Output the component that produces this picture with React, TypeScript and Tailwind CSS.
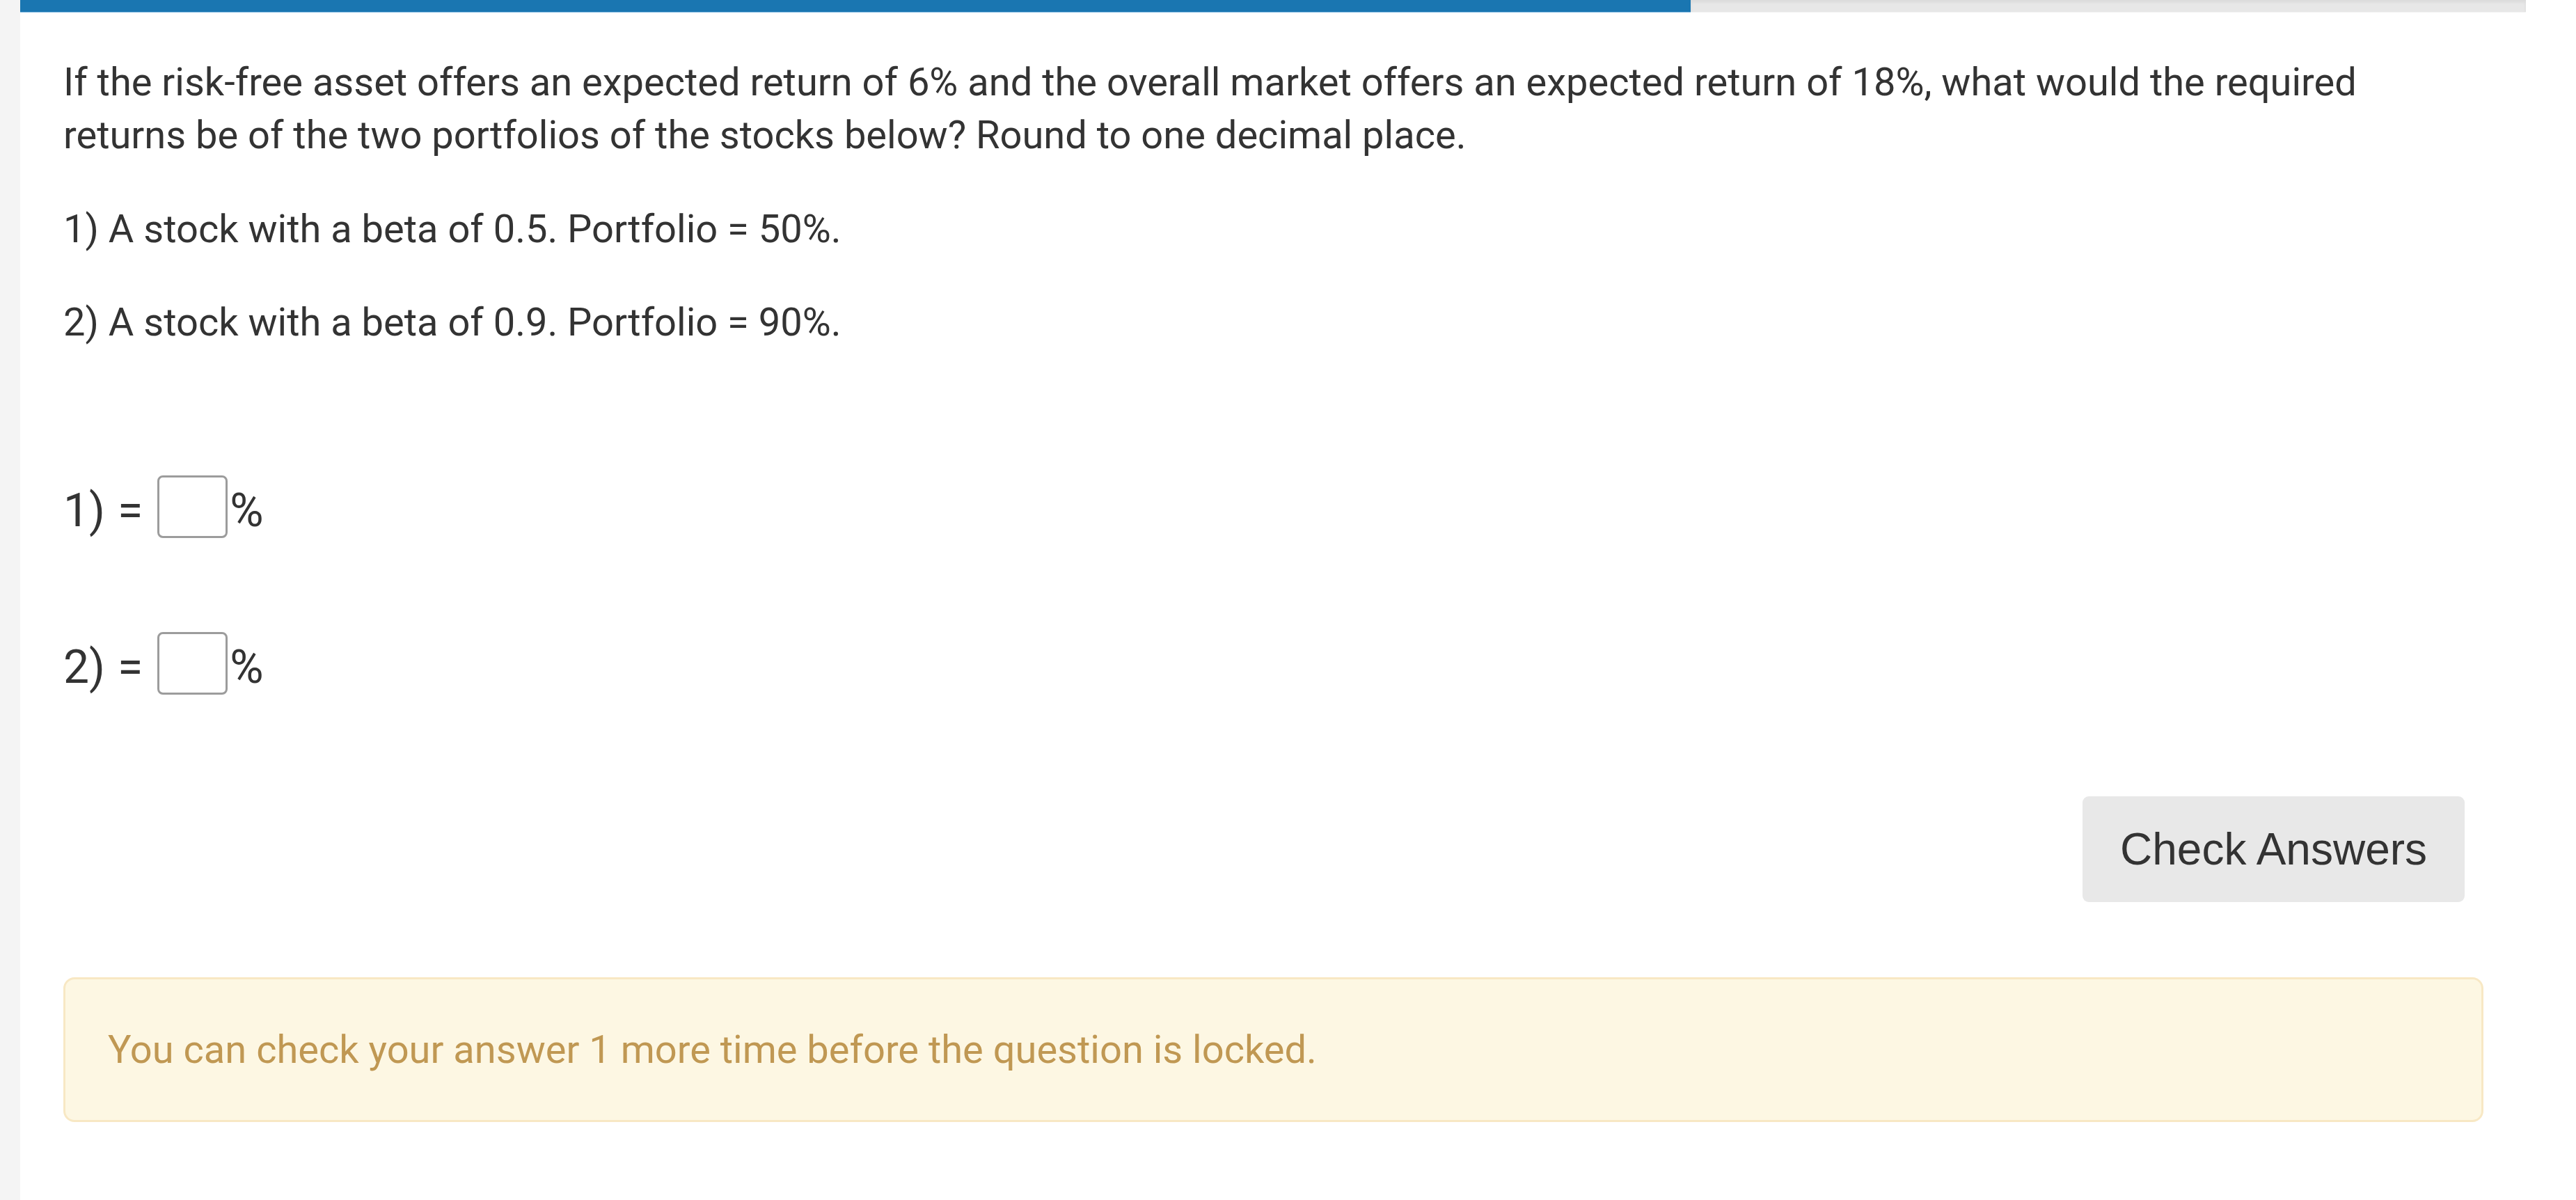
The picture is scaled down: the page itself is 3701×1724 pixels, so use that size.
export default function App() {
  const answers = ['1)', '2)']

  return (
    <div className="flex min-h-[1724px] bg-white font-['Roboto',sans-serif] text-[#333333]">
      {/* left rail */}
      <div className="w-[29px] shrink-0 bg-[#f4f4f4]" />

      <div className="w-[3600px] shrink-0 bg-white">
        {/* progress */}
        <div className="flex h-[18px] w-full">
          <div className="h-full w-2/3 border-b border-[#7fb8e0] bg-[#1a76b1]" />
          <div className="h-full flex-1 border-b border-[#f2f2f2] bg-[#e7e7e7] shadow-[inset_0_3px_4px_rgba(0,0,0,0.06)]" />
        </div>

        <div className="pl-[62px] pr-[61px] pt-[62px]">
          <p className="text-[56px] leading-[76px]">
            If the risk-free asset offers an expected return of 6% and the overall market offers an expected return of 18%, what would the required returns be of the two portfolios of the stocks below? Round to one decimal place.
          </p>
          <p className="mt-[59px] text-[56px] leading-[76px]">1) A stock with a beta of 0.5. Portfolio = 50%.</p>
          <p className="mt-[58px] text-[56px] leading-[76px]">2) A stock with a beta of 0.9. Portfolio = 90%.</p>

          <div className="mt-[182px] flex flex-col gap-[135px]">
            {answers.map((label) => (
              <div key={label} className="flex h-[90px] items-center text-[66px] leading-none">
                <span className="pt-[12px]">{label}</span>
                <span className="ml-[18px] pt-[12px]">=</span>
                <input
                  type="text"
                  className="ml-[21px] h-[90px] w-[101px] rounded-[8px] border-[3px] border-[#9c9c9c] bg-white outline-none"
                />
                <span className="ml-[3px] pt-[12px]">%</span>
              </div>
            ))}
          </div>

          <div className="mt-[146px] flex justify-end pr-[27px]">
            <button className="flex h-[152px] w-[549px] items-center justify-center rounded-[9px] bg-[#e8e8e8] font-['Liberation_Sans',Arial,sans-serif] text-[64px] text-[#333333]">
              Check Answers
            </button>
          </div>

          <div className="mt-[108px] flex h-[208px] items-center rounded-[16px] border-[3px] border-[#f8e8c4] bg-[#fdf7e3] pl-[61px] text-[56px] leading-[76px] text-[#c09853]">
            You can check your answer 1 more time before the question is locked.
          </div>
        </div>
      </div>

      <div className="flex-1 bg-white" />
    </div>
  )
}
